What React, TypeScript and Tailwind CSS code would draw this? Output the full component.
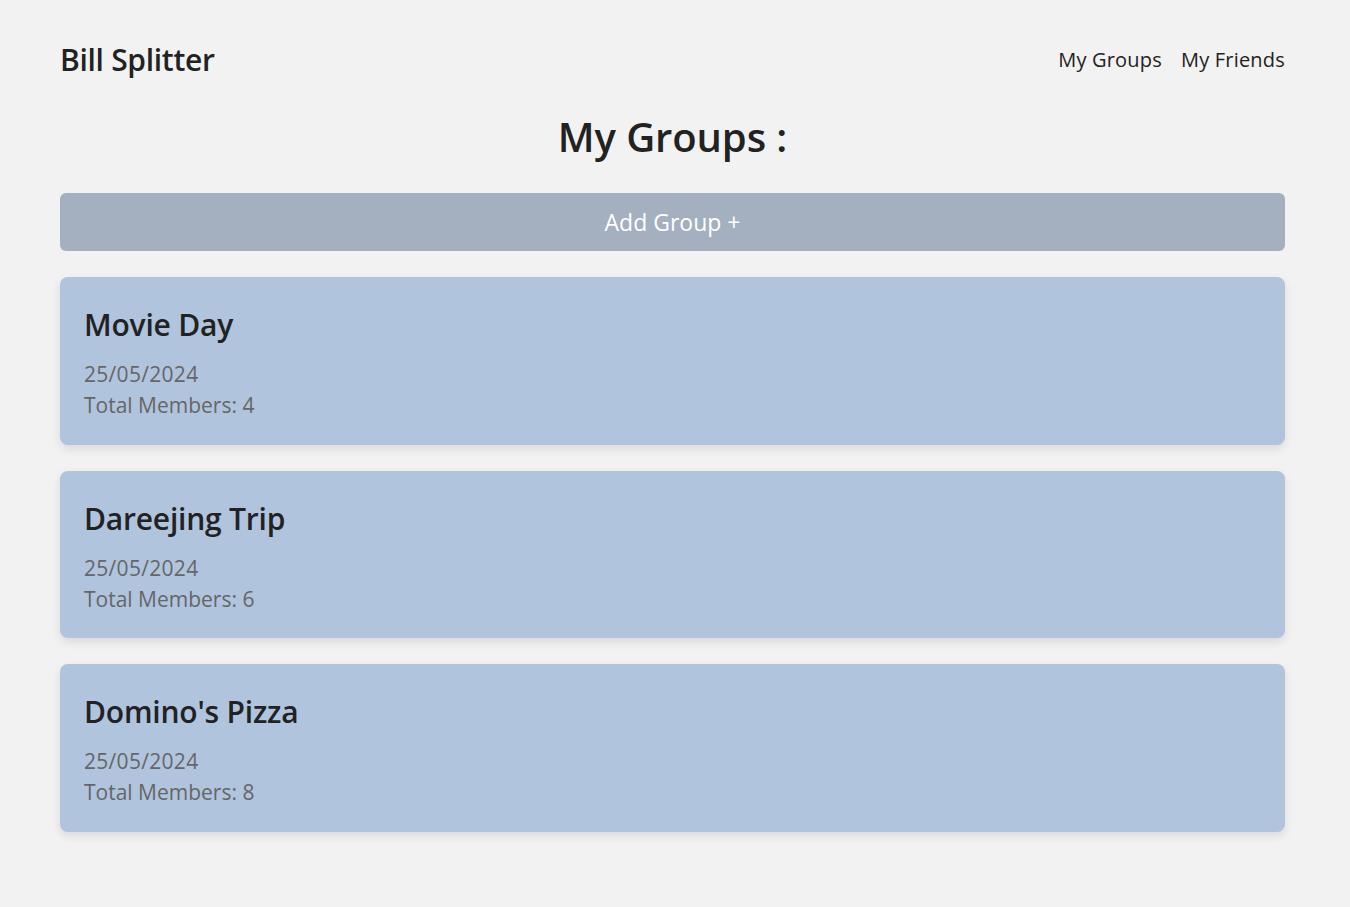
const groups = [
  { name: "Movie Day", date: "25/05/2024", members: 4 },
  { name: "Dareejing Trip", date: "25/05/2024", members: 6 },
  { name: "Domino's Pizza", date: "25/05/2024", members: 8 },
];

function GroupCard({ name, date, members }: { name: string; date: string; members: number }) {
  return (
    <div className="flex h-[167.5px] flex-col rounded-lg bg-[#b0c4de] px-6 pt-[26px] shadow-[0_4px_10px_rgba(0,0,0,0.1)]">
      <h2 className="text-[30px] font-semibold leading-[44px] tracking-[-0.2px] text-[#222]">{name}</h2>
      <p className="mt-[12px] text-[21px] leading-[31px] tracking-[0.3px] text-[#666]">{date}</p>
      <p className="text-[21px] leading-[31px] text-[#666]">Total Members: {members}</p>
    </div>
  );
}

export default function App() {
  return (
    <div
      className="min-h-[907px] bg-[#f2f2f2] pl-[60px] pr-[65px] text-[#222]"
      style={{ fontFamily: '"Open Sans", sans-serif' }}
    >
      <header className="flex items-center justify-between pt-[38px]">
        <h1 className="text-[30px] font-semibold leading-[44px] tracking-[-0.3px]">Bill Splitter</h1>
        <nav className="flex gap-[19px] text-[20px] leading-[30px] tracking-[0.2px]">
          <a>My Groups</a>
          <a>My Friends</a>
        </nav>
      </header>
      <h2 className="mt-[25px] text-center text-[40px] font-semibold leading-[60px] tracking-[-0.1px]">
        My Groups :
      </h2>
      <button className="mt-[26px] flex h-[58px] w-full items-center justify-center rounded-md bg-[#a4b0bf] text-[23px] text-white">
        Add Group +
      </button>
      <div className="mt-[26px] flex flex-col gap-[26px]">
        {groups.map((g) => (
          <GroupCard key={g.name} {...g} />
        ))}
      </div>
    </div>
  );
}
